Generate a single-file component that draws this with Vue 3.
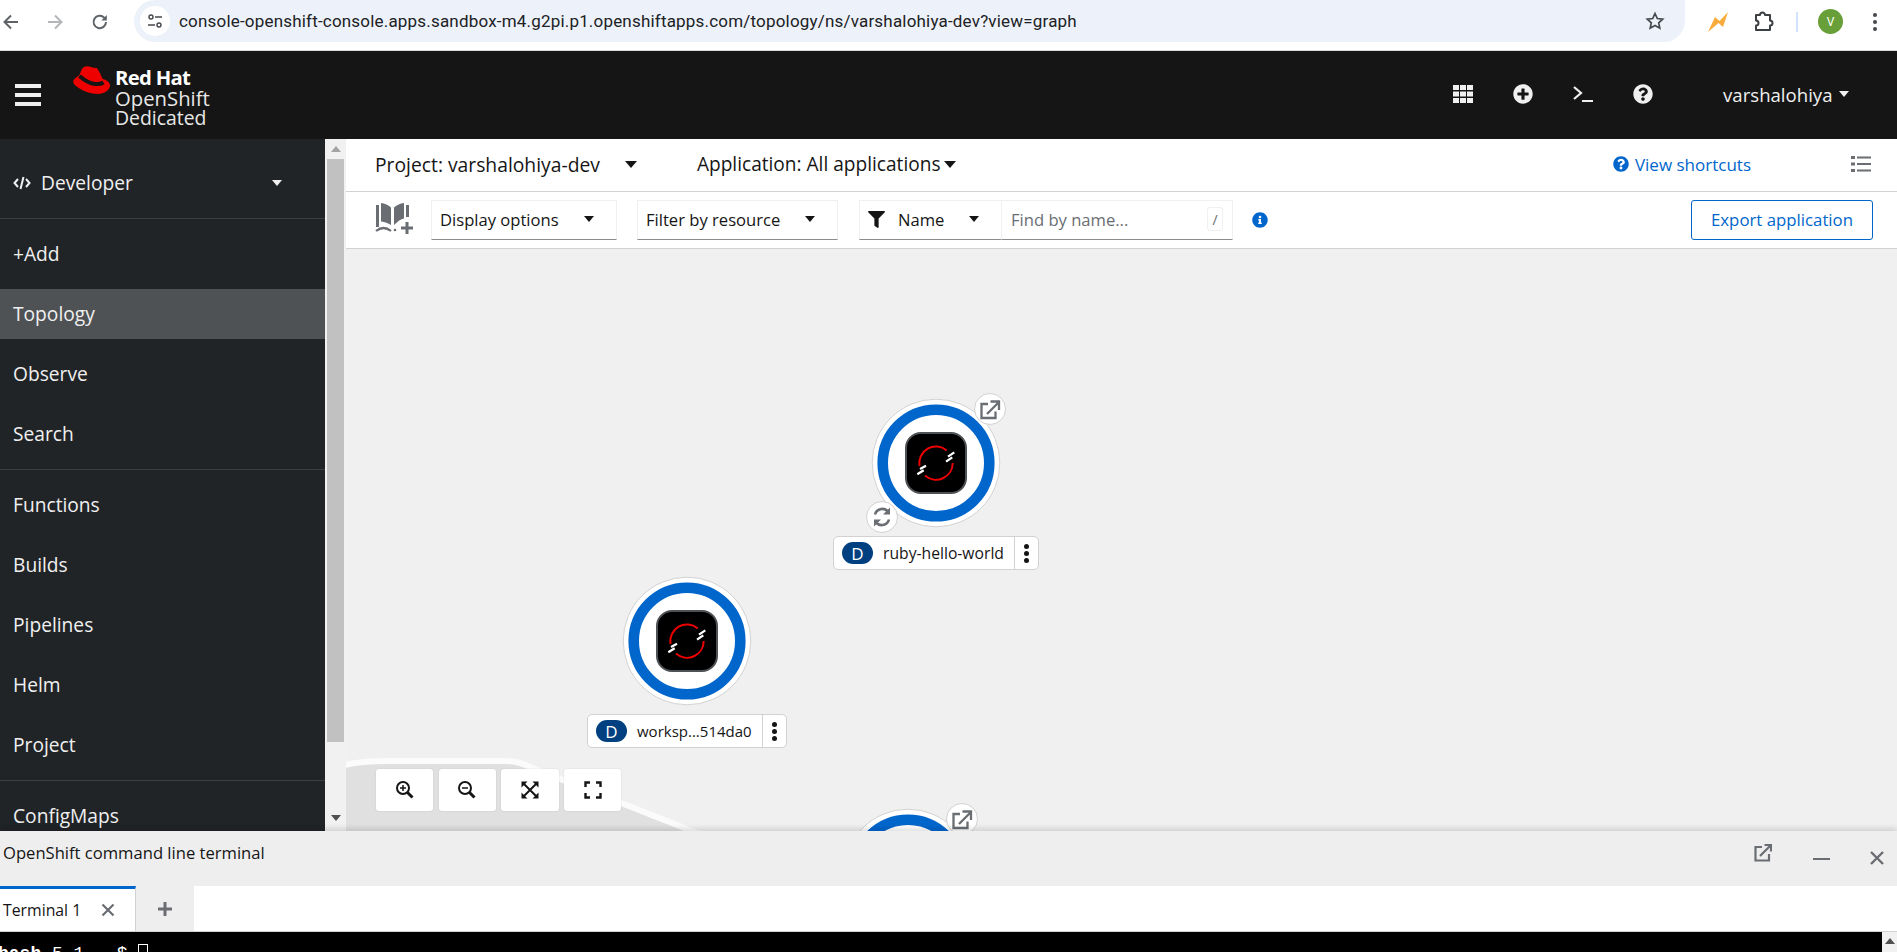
<script setup>
const navGroups = [
  ['+Add', 'Topology', 'Observe', 'Search'],
  ['Functions', 'Builds', 'Pipelines', 'Helm', 'Project'],
  ['ConfigMaps']
]
const nodes = [
  { id: 1, x: 936, y: 463, label: 'ruby-hello-world', link: true, sync: true, lw: 206, fs: 15.7 },
  { id: 2, x: 687, y: 641, label: 'worksp...514da0', link: false, sync: false, lw: 200, fs: 15 },
  { id: 3, x: 908, y: 873, label: '', link: true, sync: false, lw: 0, fs: 15 }
]
const nodeStyle = (n) => ({ left: n.x - 346 - 80 + 'px', top: n.y - 249 - 80 + 'px' })
const zoomButtons = ['in', 'out', 'fit', 'reset']
const QUESTION = 'M504 256c0 136.997-111.043 248-248 248S8 392.997 8 256C8 119.083 119.043 8 256 8s248 111.083 248 248zM262.655 90c-54.497 0-89.255 22.957-116.549 63.758-3.536 5.286-2.353 12.415 2.715 16.258l34.699 26.31c5.205 3.947 12.621 3.008 16.665-2.122 17.864-22.658 30.113-35.797 57.303-35.797 20.429 0 45.698 13.148 45.698 32.958 0 14.976-12.363 22.667-32.534 33.976C247.128 238.528 216 254.941 216 296v4c0 6.627 5.373 12 12 12h56c6.627 0 12-5.373 12-12v-1.333c0-28.462 83.186-29.647 83.186-106.667 0-58.002-60.165-102-116.531-102zM256 338c-25.365 0-46 20.635-46 46 0 25.364 20.635 46 46 46s46-20.636 46-46c0-25.365-20.635-46-46-46z'
</script>

<template>
  <div class="page">
    <div class="chrome">
      <svg class="c-ico" width="20" height="20" viewBox="0 0 20 20"><path d="M17 10H4M10 3.500 3.500 10l6.500 6.500" fill="none" stroke="#5f6368" stroke-width="2"/></svg>
      <svg class="c-ico fwd" width="20" height="20" viewBox="0 0 20 20"><path d="M3 10h13M10 3.500 16.500 10 10 16.500" fill="none" stroke="#b4b6b9" stroke-width="2"/></svg>
      <svg class="c-ico rel" width="20" height="20" viewBox="0 0 20 20"><path d="M16 10a6.200 6.200 0 1 1-1.800-4.400L16 7.500" fill="none" stroke="#5f6368" stroke-width="2"/><path d="M16.800 3v5.500h-5.500z" fill="#5f6368"/></svg>
      <div class="omni">
        <span class="tune">
          <svg width="16" height="16" viewBox="0 0 16 16" fill="none" stroke="#45484c" stroke-width="1.400"><circle cx="4" cy="4" r="2"/><path d="M8 4h7M1 12h7"/><circle cx="12" cy="12" r="2"/></svg>
        </span>
        <span class="url">console-openshift-console.apps.sandbox-m4.g2pi.p1.openshiftapps.com/topology/ns/varshalohiya-dev?view=graph</span>
        <svg class="star" width="20" height="20" viewBox="0 0 20 20"><path d="m10 2.500 2.300 5 5.400.6-4 3.700 1.100 5.400L10 14.500l-4.800 2.700 1.100-5.400-4-3.700 5.400-.6z" fill="none" stroke="#45484c" stroke-width="1.700"/></svg>
      </div>
      <svg class="bolt" width="22" height="22" viewBox="0 0 22 22"><path d="M1 21 8 6l4.500 4L21 1l-5 15-4.500-4z" fill="#f9ab3c"/></svg>
      <svg class="puzzle" width="22" height="22" viewBox="0 0 22 22"><path d="M4 4h4a2.500 2.500 0 0 1 5 0h5v5.500a2.500 2.500 0 0 1 0 5V19H4v-4.500a2.500 2.500 0 0 0 0-5z" fill="none" stroke="#3c4043" stroke-width="2" stroke-linejoin="round"/></svg>
      <span class="sep"></span>
      <span class="avatar">V</span>
      <span class="kebab"><i></i><i></i><i></i></span>
    </div>

    <header class="mast">
      <div class="burger"><i></i><i></i><i></i></div>
      <svg class="hat" width="37" height="28" viewBox="0 0 37 28">
        <path d="M8 5C9 1.500 12 0 15 .3 18 .8 21 2.500 24 2c2 3 4 7 5.500 10.700C33 14 37 16 37 19.500 37 24 31 28 25 28 16 28 8 24 3 20 0 17.500-.5 15 1 13.500 2.500 12 5 10 6.500 9z" fill="#e00"/>
        <path d="M6.500 10C11 14 17 17.500 22 18c3 .3 6 0 8.500-1.500" fill="none" stroke="#151515" stroke-width="4"/>
      </svg>
      <div class="brand">
        <b>Red Hat</b>
        <span>OpenShift</span>
        <span class="ded">Dedicated</span>
      </div>
      <div class="mast-right">
        <svg class="m-ico" width="20" height="18" viewBox="0 0 20 18" fill="#f0f0f0"><path d="M0 0h6v5H0zM7 0h6v5H7zM14 0h6v5h-6zM0 6.500h6v5H0zM7 6.500h6v5H7zM14 6.500h6v5h-6zM0 13h6v5H0zM7 13h6v5H7zM14 13h6v5h-6z"/></svg>
        <svg class="m-ico" width="20" height="20" viewBox="0 0 512 512" fill="#f0f0f0"><path d="M256 8C119 8 8 119 8 256s111 248 248 248 248-111 248-248S393 8 256 8zm144 276c0 6.600-5.400 12-12 12h-92v92c0 6.600-5.400 12-12 12h-56c-6.600 0-12-5.400-12-12v-92h-92c-6.600 0-12-5.400-12-12v-56c0-6.600 5.400-12 12-12h92v-92c0-6.600 5.400-12 12-12h56c6.600 0 12 5.400 12 12v92h92c6.600 0 12 5.400 12 12v56z"/></svg>
        <svg class="m-ico" width="20" height="18" viewBox="0 0 20 18" fill="none" stroke="#f0f0f0" stroke-width="2.200"><path d="m1 2 7 6-7 6M9 16h11"/></svg>
        <svg class="m-ico" width="20" height="20" viewBox="0 0 512 512" fill="#f0f0f0"><path :d="QUESTION"/></svg>
        <span class="user">varshalohiya</span>
        <span class="caret light small"></span>
      </div>
    </header>

    <div class="body">
      <aside class="side">
        <div class="persp">
          <svg width="18" height="14" viewBox="0 0 18 14" fill="none" stroke="#f0f0f0" stroke-width="2"><path d="M5 3 1.500 7 5 11M13 3l3.500 4L13 11M10.500 1 7.500 13"/></svg>
          <span class="persp-name">Developer</span>
          <span class="caret light small-persp"></span>
        </div>
        <nav v-for="(group, gi) in navGroups" :key="gi" class="nav-group">
          <div v-for="item in group" :key="item" class="nav-item" :class="{ active: item === 'Topology' }">{{ item }}</div>
        </nav>
      </aside>
      <div class="scroll">
        <span class="sc-up"></span>
        <span class="sc-thumb"></span>
        <span class="sc-down"></span>
      </div>

      <main class="main">
        <div class="proj-bar">
          <span class="proj">Project: varshalohiya-dev</span>
          <span class="caret dark proj-caret"></span>
          <span class="app">Application: All applications</span>
          <span class="caret dark app-caret"></span>
          <span class="grow"></span>
          <svg width="16" height="16" viewBox="0 0 512 512" fill="#06c"><path :d="QUESTION"/></svg>
          <span class="shortcuts">View shortcuts</span>
          <svg class="list-ico" width="20" height="16" viewBox="0 0 20 16" fill="#6a6e73"><path d="M0 0h4v3H0zM6 .500h14v2H6zM0 6.500h4v3H0zM6 7h14v2H6zM0 13h4v3H0zM6 13.500h14v2H6z"/></svg>
        </div>
        <div class="tool-bar">
          <svg class="book" width="38" height="32" viewBox="0 0 38 32">
            <path d="M1 3h3v22H1zM6 1c4 .5 7 2 10 4.500V23c-3-2-6-3-10-3.500zM19 5.500C22 3 25 1.500 29 1v15.500c-2.500.5-4.500 1.500-6 3L19 23zM31 3h3v12h-3z" fill="#6a6e73"/>
            <path d="M1 29c5-4 10-4 15 0" fill="none" stroke="#6a6e73" stroke-width="2.200"/>
            <circle cx="20" cy="28" r="1.300" fill="#6a6e73"/>
            <path d="M32 20v12M26 26h12" stroke="#6a6e73" stroke-width="3"/>
          </svg>
          <div class="select sel-display">Display options<span class="caret dark tiny"></span></div>
          <div class="select sel-filter">Filter by resource<span class="caret dark tiny"></span></div>
          <div class="select sel-name">
            <svg width="17" height="17" viewBox="0 0 512 512" fill="#151515"><path d="M487.976 0H24.028C2.710 0-8.047 25.866 7.058 40.971L192 225.941V432c0 7.831 3.821 15.170 10.237 19.662l80 55.980C298.020 518.690 320 507.493 320 487.980V225.941l184.947-184.970C520.021 25.896 509.338 0 487.976 0z"/></svg>
            <span class="name-txt">Name</span><span class="caret dark tiny"></span>
          </div>
          <div class="find">
            <span>Find by name...</span>
            <span class="slash">/</span>
          </div>
          <svg class="info" width="16" height="16" viewBox="0 0 512 512" fill="#06c"><path d="M256 8C119.043 8 8 119.083 8 256c0 136.997 111.043 248 248 248s248-111.003 248-248C504 119.083 392.957 8 256 8zm0 110c23.196 0 42 18.804 42 42s-18.804 42-42 42-42-18.804-42-42 18.804-42 42-42zm56 254c0 6.627-5.373 12-12 12h-88c-6.627 0-12-5.373-12-12v-24c0-6.627 5.373-12 12-12h12v-64h-12c-6.627 0-12-5.373-12-12v-24c0-6.627 5.373-12 12-12h64c6.627 0 12 5.373 12 12v100h12c6.627 0 12 5.373 12 12v24z"/></svg>
          <span class="grow"></span>
          <button class="export">Export application</button>
        </div>

        <div class="canvas">
          <svg class="group-shape" width="1551" height="582" viewBox="346 249 1551 582">
            <path d="M340 766Q360 761 385 761L505 761Q518 761 530 767L720 842L340 842Z" fill="#e0e0e0" stroke="#fbfbfb" stroke-width="6"/>
          </svg>
          <div v-for="n in nodes" :key="n.id" class="node" :style="nodeStyle(n)">
            <svg width="160" height="160" viewBox="0 0 160 160">
              <circle cx="80" cy="80" r="63.800" fill="#fff" stroke="#d2d2d2" stroke-width="1"/>
              <circle cx="80" cy="80" r="53.300" fill="#fff" stroke="#06c" stroke-width="10.600"/>
              <rect x="50" y="50" width="60" height="60" rx="15" fill="#000" stroke="#4f5255" stroke-width="2"/>
              <path d="M90.700 67.400A16.700 16.700 0 0 0 63.500 83" fill="none" stroke="#e00" stroke-width="2"/>
              <path d="M96.700 80A16.700 16.700 0 0 1 69 92.600" fill="none" stroke="#e00" stroke-width="2"/>
              <path d="M92 73.700l6.300-4.400M90 78.700l6.300-4.400M64 86l6-3.300M61.300 91.300l6.400-4" stroke="#fff" stroke-width="2.200"/>
              <g v-if="n.link">
                <circle cx="134" cy="26" r="15.500" fill="#fff" stroke="#d2d2d2"/>
                <path d="M132 21h-6.500v14h14v-6.500M131 31l11-11M134.500 18.500h8.500v8.500" fill="none" stroke="#6a6e73" stroke-width="2.300"/>
              </g>
              <g v-if="n.sync">
                <circle cx="26" cy="134" r="15.500" fill="#fff" stroke="#d2d2d2"/>
                <path d="M19 131.500a7.500 7.500 0 0 1 12.500-3.500M33 136.500a7.500 7.500 0 0 1-12.500 3.500" fill="none" stroke="#6a6e73" stroke-width="2.600"/>
                <path d="M34 124.500v7h-7zM18 143.500v-7h7z" fill="#6a6e73"/>
              </g>
            </svg>
            <div v-if="n.label" class="label" :style="{ width: n.lw + 'px', fontSize: n.fs + 'px' }">
              <span class="d-badge">D</span>
              <span class="label-txt">{{ n.label }}</span>
              <span class="label-menu"><i></i><i></i><i></i></span>
            </div>
          </div>
          <div class="zoom-bar">
            <button v-for="b in zoomButtons" :key="b" class="zoom-btn">
              <svg width="20" height="20" viewBox="0 0 20 20" fill="none" stroke="#151515" stroke-width="2">
                <template v-if="b === 'in' || b === 'out'">
                  <circle cx="8" cy="8" r="6"/>
                  <path d="m12.500 12.500 5 5" stroke-width="3"/>
                  <path d="M5 8h6" stroke-width="1.500"/>
                  <path v-if="b === 'in'" d="M8 5v6" stroke-width="1.500"/>
                </template>
                <template v-else-if="b === 'fit'">
                  <path d="m4 4 12 12M16 4 4 16"/>
                  <path d="M1.500 1.500h6l-6 6zM18.500 1.500v6l-6-6zM1.500 18.500v-6l6 6zM18.500 18.500h-6l6-6z" fill="#151515" stroke="none"/>
                </template>
                <path v-else d="M2.500 7V2.500H7M13 2.500h4.500V7M2.500 13v4.500H7M13 17.500h4.500V13" stroke-width="2.400"/>
              </svg>
            </button>
          </div>
        </div>
      </main>
    </div>

    <section class="term">
      <div class="term-head">
        <span class="term-title">OpenShift command line terminal</span>
        <span class="grow"></span>
        <svg class="t-link" width="18" height="18" viewBox="0 0 18 18" fill="none" stroke="#6a6e73" stroke-width="2.200"><path d="M8 3H1.500v13.500H15V10M6 12 16 2M10.500 1H17v6.500"/></svg>
        <span class="t-min"></span>
        <svg class="t-close" width="14" height="14" viewBox="0 0 14 14" stroke="#6a6e73" stroke-width="2.400"><path d="m1 1 12 12M13 1 1 13"/></svg>
      </div>
      <div class="term-tabs">
        <div class="tab">
          <span>Terminal 1</span>
          <svg width="14" height="14" viewBox="0 0 14 14" stroke="#6a6e73" stroke-width="2.200"><path d="m1.500 1.500 11 11M12.500 1.500l-11 11"/></svg>
        </div>
        <div class="add-tab">
          <svg width="16" height="16" viewBox="0 0 16 16" stroke="#6a6e73" stroke-width="3"><path d="M8 1v14M1 8h14"/></svg>
        </div>
      </div>
      <div class="term-screen">
        <span class="prompt"><b>bash</b>-5.1 ~ $ <i class="cursor"></i></span>
        <span class="t-scroll"><em></em></span>
      </div>
    </section>
  </div>
</template>

<style>
html, body { margin: 0; overflow: hidden; }
</style>

<style scoped>
.page { width: 1897px; height: 952px; display: flex; flex-direction: column; overflow: hidden; background: #fff; font-family: "Open Sans", "Noto Sans", sans-serif; color: #151515; }
.grow { flex: 1; }
.caret { display: inline-block; width: 0; height: 0; border-left: 6px solid transparent; border-right: 6px solid transparent; border-top: 7px solid #151515; }
.caret.light { border-top-color: #f0f0f0; }
.caret.small { border-left-width: 5px; border-right-width: 5px; border-top-width: 6px; margin-left: 6.500px; }
.caret.small-persp { border-left-width: 5px; border-right-width: 5px; border-top-width: 6px; }
.caret.tiny { border-left-width: 5.500px; border-right-width: 5.500px; border-top-width: 6px; }

.chrome { height: 50px; flex: none; display: flex; align-items: center; background: #fff; border-bottom: 1px solid #d9d9d9; }
.c-ico { margin-left: 1px; margin-bottom: 7px; flex: none; }
.c-ico.fwd { margin-left: 24px; }
.c-ico.rel { margin-left: 25px; }
.omni { margin-left: 24px; width: 1551px; height: 42px; align-self: flex-start; background: #edf2fa; border-radius: 24px 0 24px 24px; display: flex; align-items: center; flex: none; }
.tune { width: 30px; height: 30px; margin-left: 6px; border-radius: 50%; background: #fff; display: flex; align-items: center; justify-content: center; }
.url { margin-left: 9px; font-family: "Roboto", sans-serif; font-size: 17px; color: #202124; letter-spacing: 0.19px; white-space: nowrap; }
.star { margin-left: auto; margin-right: 20px; }
.bolt { margin-left: 22px; margin-bottom: 7px; }
.puzzle { margin-left: 23px; margin-bottom: 7px; }
.sep { width: 2px; height: 20px; background: #d3e3fd; margin-left: 22px; margin-bottom: 7px; }
.avatar { width: 25px; height: 25px; margin-left: 20px; margin-bottom: 7px; border-radius: 50%; background: #689f38; color: #fff; font-size: 12px; font-family: "Roboto", sans-serif; display: flex; align-items: center; justify-content: center; flex: none; }
.kebab { margin-left: 30px; margin-bottom: 7px; display: flex; flex-direction: column; gap: 3px; }
.kebab i { width: 4px; height: 4px; border-radius: 50%; background: #45484c; }

.mast { height: 88px; flex: none; background: #151515; display: flex; align-items: center; color: #f0f0f0; }
.burger { margin-left: 15px; width: 26px; display: flex; flex-direction: column; gap: 5px; }
.burger i { height: 4px; background: #f0f0f0; }
.hat { margin-left: 32px; margin-bottom: 31px; flex: none; }
.brand { margin-left: 5px; margin-top: 6px; display: flex; flex-direction: column; font-size: 20.300px; line-height: 20.500px; color: #e8e8e8; }
.brand b { color: #fff; font-weight: 700; letter-spacing: -0.7px; }
.brand .ded { font-size: 19.400px; }
.mast-right { margin-left: auto; display: flex; align-items: center; padding-right: 48px; padding-bottom: 2px; }
.m-ico { margin-left: 40px; flex: none; }
.user { margin-left: 70px; font-size: 18.600px; color: #f0f0f0; }

.body { flex: 1; min-height: 0; display: flex; }
.side { width: 325px; flex: none; background: #212427; color: #f0f0f0; overflow: hidden; font-size: 19.200px; }
.persp { box-sizing: border-box; height: 80px; padding: 8px 43px 0 13px; display: flex; align-items: center; border-bottom: 1px solid #3c3f42; }
.persp-name { margin-left: 10px; flex: 1; }
.nav-group { padding: 10px 0; border-bottom: 1px solid #3c3f42; }
.nav-item { box-sizing: border-box; height: 50px; padding: 0 0 1px 13px; display: flex; align-items: center; }
.nav-item + .nav-item { margin-top: 10px; }
.nav-item.active { background: #4f5255; }

.scroll { width: 21px; flex: none; background: #f1f1f1; display: flex; flex-direction: column; align-items: center; position: relative; }
.sc-up { margin-top: 7px; border-left: 5px solid transparent; border-right: 5px solid transparent; border-bottom: 6px solid #a3a3a3; }
.sc-thumb { margin-top: 7px; width: 17px; height: 583px; background: #c1c1c1; }
.sc-down { margin-top: 73px; border-left: 5px solid transparent; border-right: 5px solid transparent; border-top: 6px solid #505050; }

.main { flex: 1; min-width: 0; display: flex; flex-direction: column; background: #fff; }
.proj-bar { height: 53px; flex: none; box-sizing: border-box; border-bottom: 1px solid #d2d2d2; display: flex; align-items: center; padding: 0 26px 2px 29px; font-size: 19.300px; }
.proj-caret { margin-left: 25px; }
.app { margin-left: 60px; font-size: 19.100px; }
.app-caret { margin-left: 3px; }
.shortcuts { margin-left: 6px; color: #06c; font-size: 17px; }
.list-ico { margin-left: 100px; }
.tool-bar { height: 57px; flex: none; box-sizing: border-box; border-bottom: 1px solid #d2d2d2; display: flex; align-items: center; padding: 0 24px 0 29px; font-size: 16.600px; }
.book { flex: none; margin-bottom: 4px; }
.select { box-sizing: border-box; height: 40px; display: flex; align-items: center; justify-content: space-between; padding: 0 22px 2px 8px; border: 1px solid #f0f0f0; border-bottom: 1px solid #8a8d90; }
.sel-display { margin-left: 18px; width: 186px; }
.sel-filter { margin-left: 20px; width: 201px; }
.sel-name { margin-left: 21px; width: 143px; justify-content: flex-start; }
.name-txt { margin-left: 13px; flex: 1; }
.find { box-sizing: border-box; width: 231px; height: 40px; display: flex; align-items: center; justify-content: space-between; padding: 0 9px 2px; border: 1px solid #f0f0f0; border-left: 0; border-bottom: 1px solid #8a8d90; color: #6a6e73; }
.slash { width: 16px; height: 24px; border: 1px solid #f0f0f0; border-radius: 3px; display: flex; align-items: center; justify-content: center; font-size: 14px; box-sizing: border-box; }
.info { margin-left: 19px; flex: none; }
.export { box-sizing: border-box; width: 182px; height: 40px; background: #fff; color: #06c; border: 1px solid #06c; border-radius: 3px; font: inherit; font-size: 16.800px; padding: 0 0 2px; }

.canvas { flex: 1; min-height: 0; position: relative; overflow: hidden; background: #f0f0f0; }
.group-shape { position: absolute; left: 0; top: 0; }
.node { position: absolute; width: 160px; height: 160px; }
.node > svg { display: block; }
.label { position: absolute; top: 153px; left: 50%; transform: translateX(-50%); box-sizing: border-box; height: 34px; background: #fff; border: 1px solid #d2d2d2; border-radius: 5px; display: flex; align-items: center; padding-left: 8px; white-space: nowrap; }
.d-badge { width: 31px; height: 22px; border-radius: 11px; background: #004080; color: #fff; font-size: 17px; display: flex; align-items: center; justify-content: center; flex: none; }
.label-txt { flex: 1; margin-left: 10px; }
.label-menu { width: 23px; align-self: stretch; border-left: 1px solid #d2d2d2; display: flex; flex-direction: column; align-items: center; justify-content: center; gap: 2px; flex: none; }
.label-menu i { width: 5px; height: 5px; border-radius: 50%; background: #151515; }
.zoom-bar { position: absolute; left: 30px; bottom: 20px; display: flex; gap: 5.300px; }
.zoom-btn { width: 57.400px; height: 42px; background: #fff; border: 0; border-radius: 3px; padding: 0; display: flex; align-items: center; justify-content: center; box-shadow: 0 0 2px rgba(0,0,0,.12); }

.term { flex: none; height: 121px; display: flex; flex-direction: column; position: relative; box-shadow: 0 -3px 5px rgba(0,0,0,.12); }
.term-head { height: 55px; flex: none; background: #eee; display: flex; align-items: flex-start; font-size: 16.600px; }
.term-title { margin: 10px 0 0 3px; }
.t-link { margin: 13px 1px 0 0; }
.t-min { width: 17px; height: 2px; margin: 27px 0 0 40px; background: #6a6e73; }
.t-close { margin: 20px 13px 0 40px; }
.term-tabs { height: 46px; flex: none; box-sizing: border-box; background: #fff; border-bottom: 1px solid #d2d2d2; display: flex; }
.tab { width: 136px; box-sizing: border-box; border-top: 3px solid #06c; border-right: 1px solid #d2d2d2; background: #fff; display: flex; align-items: center; padding: 0 0 1px 3px; font-size: 15.800px; }
.tab svg { margin-left: 20px; }
.add-tab { width: 58px; background: #eee; display: flex; align-items: center; justify-content: center; }
.term-screen { flex: 1; background: #000; color: #fff; position: relative; overflow: hidden; }
.prompt { position: absolute; left: -2px; top: 12px; font: 400 18px/20px "Liberation Mono", monospace; white-space: pre; }
.cursor { display: inline-block; width: 10px; height: 20px; border: 1px solid #fff; box-sizing: border-box; vertical-align: top; }
.t-scroll { position: absolute; right: 0; top: 0; width: 15px; height: 20px; background: #f1f1f1; }
.t-scroll em { display: block; margin: 6px auto 0; width: 0; border-left: 5px solid transparent; border-right: 5px solid transparent; border-bottom: 6px solid #505050; }
</style>
